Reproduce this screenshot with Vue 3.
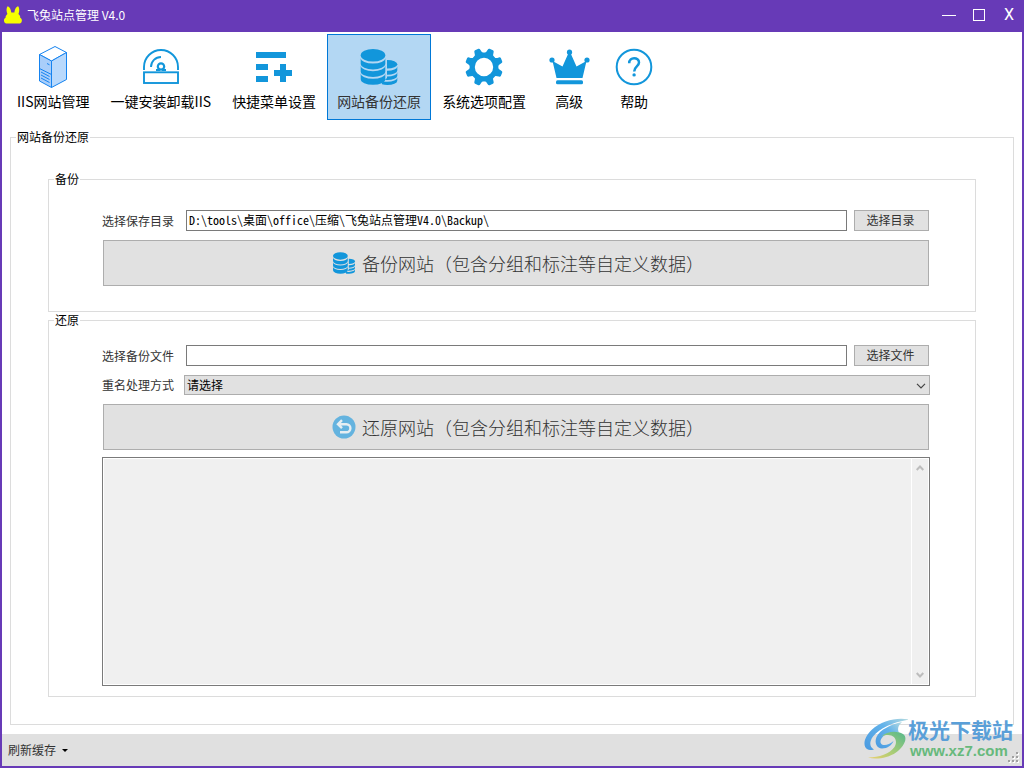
<script setup>
import { ref } from 'vue'

const tools = [
  { id: 'server', label: 'IIS网站管理' },
  { id: 'disc', label: '一键安装卸载IIS' },
  { id: 'menu', label: '快捷菜单设置' },
  { id: 'database', label: '网站备份还原' },
  { id: 'gear', label: '系统选项配置' },
  { id: 'crown', label: '高级' },
  { id: 'help', label: '帮助' },
]
const active = ref('database')
const saveDir = ref('D:\\tools\\桌面\\office\\压缩\\飞兔站点管理V4.0\\Backup\\')
const backupFile = ref('')
const conflict = ref('')
const log = ref('')
const teeth = [22.5, 67.5, 112.5, 157.5, 202.5, 247.5, 292.5, 337.5]
</script>

<template>
  <div class="window">
    <svg class="defs" width="0" height="0" aria-hidden="true">
      <symbol id="icon-server" viewBox="0 0 44 44">
        <g stroke="#1583f0" stroke-width="1" stroke-linejoin="round">
          <path d="M24 1.5 35.5 7.5 20.5 16 8.5 9.5Z" fill="#fff" />
          <path d="M8.5 9.5 20.5 16V42.5L8.5 36Z" fill="#a9cefa" />
          <path d="M20.5 16 35.5 7.5V34.5L20.5 42.5Z" fill="#b9d9fc" />
          <path d="M8.5 23.5 20.5 29.5M10 27 18.5 31.5M10 30 18.5 34.5M10 33 18.5 37.5M16 18.5 18.5 19.8" fill="none" />
        </g>
      </symbol>
      <symbol id="icon-disc" viewBox="0 0 44 44">
        <g fill="none" stroke="#1296db" stroke-width="1.9">
          <path d="M5 25V22a17 17 0 0 1 34 0v3M12 22a10 10 0 0 1 10-10M17 25h4M23 25h4" />
          <circle cx="22" cy="21.5" r="3.2" stroke-width="2.2" />
          <rect x="5" y="27.3" width="34" height="10.7" />
        </g>
      </symbol>
      <symbol id="icon-menu" viewBox="0 0 44 44">
        <path fill="#1296db" d="M4 7h30v6H4zM4 19h12v6H4zM4 31h12v6H4zM28 19h6v6h6v6h-6v6h-6v-6h-6v-6h6z" />
      </symbol>
      <clipPath id="small-stack">
        <path d="M30 13V33L25 37.5V42H42V13Z" />
      </clipPath>
      <symbol id="icon-database" viewBox="0 0 44 44">
        <g fill="#1296db">
          <ellipse cx="16" cy="10.2" rx="12.3" ry="6.3" />
          <path d="M3.7 13A12.3 5.6 0 0 0 28.3 13v5.8A12.3 5.6 0 0 1 3.7 18.8z" />
          <path d="M3.7 20.6A12.3 5.6 0 0 0 28.3 20.6v5.8A12.3 5.6 0 0 1 3.7 26.4z" />
          <path d="M3.7 28.2A12.3 5.6 0 0 0 28.3 28.2v6A12.3 5.6 0 0 1 3.7 34.2z" />
          <g clip-path="url(#small-stack)">
            <ellipse cx="30.3" cy="19.3" rx="10" ry="4.3" />
            <path d="M20.3 21.5A10 4.3 0 0 0 40.3 21.5v4A10 4.3 0 0 1 20.3 25.5z" />
            <path d="M20.3 27.3A10 4.3 0 0 0 40.3 27.3v3.4A10 4.3 0 0 1 20.3 30.7z" />
            <path d="M20.3 32.5A10 4.3 0 0 0 40.3 32.5v3.2A10 4.3 0 0 1 20.3 35.7z" />
          </g>
        </g>
      </symbol>
      <symbol id="icon-gear" viewBox="0 0 44 44">
        <circle cx="22" cy="22" r="11.8" fill="none" stroke="#1296db" stroke-width="5.2" />
        <path
          v-for="a in teeth"
          :key="a"
          d="M16.8 9.5Q18.6 8 18.8 4.6Q18.9 3.2 20.2 3H23.8Q25.1 3.2 25.2 4.6Q25.4 8 27.2 9.5L25 12H19Z"
          fill="#1296db"
          :transform="`rotate(${a} 22 22)`"
        />
      </symbol>
      <symbol id="icon-crown" viewBox="0 0 44 44">
        <g fill="#1296db">
          <circle cx="22.5" cy="7.2" r="2.6" />
          <circle cx="5" cy="15" r="2.6" />
          <circle cx="40" cy="15" r="2.6" />
          <path d="M5.5 16 15.5 21.5 21.5 8H23.5L29.5 21.5 39.5 16 35.5 33H9.5Z" />
          <rect x="9" y="35.2" width="27" height="4" rx="1.5" />
        </g>
      </symbol>
      <symbol id="icon-help" viewBox="0 0 44 44">
        <circle cx="22" cy="22" r="17.3" fill="none" stroke="#1296db" stroke-width="2" />
        <path d="M17.2 18.2C17.2 11.6 27 11.8 27 17.6 27 21.4 22.2 21.6 22.2 26.4" fill="none" stroke="#1296db" stroke-width="2.5" />
        <circle cx="22.1" cy="29.9" r="1.7" fill="#1296db" />
      </symbol>
      <symbol id="icon-undo" viewBox="0 0 24 24">
        <circle cx="12" cy="12" r="11.5" fill="#64b3df" />
        <path d="M6.5 9.2H14.4a4 4 0 0 1 0 8H8M10 5.2 6 9.2l4 4" fill="none" stroke="#e6eef2" stroke-width="2.4" />
      </symbol>
    </svg>

    <header class="titlebar">
      <svg class="logo" width="20" height="18" viewBox="0 0 20 18" aria-hidden="true">
        <path fill="#f7ff00" d="M4.6.2C6.4.4 8 3.5 8.3 6.6H11.4C11.7 3.5 13.3.4 15.1.2 16.8 2 16.4 6 15.4 8 17 9.2 17.4 10.6 17.2 11.8 19.6 13 19.4 16.6 17 17.6H3C.6 16.6.2 13 2.6 11.8 2.4 10.6 3 9.2 4.4 8 3.4 5.6 3 2.2 4.6.2Z" />
      </svg>
      <h1>飞兔站点管理 V4.0</h1>
      <div class="controls">
        <button type="button" aria-label="最小化">
          <svg width="14" height="14" viewBox="0 0 14 14"><path d="M0 7.5H14" stroke="#fff" /></svg>
        </button>
        <button type="button" aria-label="最大化">
          <svg width="14" height="14" viewBox="0 0 14 14"><rect x="1.5" y="1.5" width="11" height="11" fill="none" stroke="#fff" /></svg>
        </button>
        <button type="button" aria-label="关闭">X</button>
      </div>
    </header>

    <nav class="toolbar">
      <button
        v-for="t in tools"
        :key="t.id"
        type="button"
        :class="{ active: active === t.id }"
        @click="active = t.id"
      >
        <svg width="44" height="44" aria-hidden="true"><use :href="`#icon-${t.id}`" /></svg>
        <span>{{ t.label }}</span>
      </button>
    </nav>

    <fieldset class="page">
      <legend>网站备份还原</legend>
      <div class="page-body">
        <fieldset>
          <legend>备份</legend>
          <div class="group backup">
            <div class="row">
              <label for="save-dir">选择保存目录</label>
              <input id="save-dir" v-model="saveDir" type="text" spellcheck="false" />
              <button type="button" class="pick">选择目录</button>
            </div>
            <button type="button" class="action">
              <svg width="24" height="24" viewBox="2 2 40 40" aria-hidden="true"><use href="#icon-database" width="44" height="44" /></svg>
              备份网站（包含分组和标注等自定义数据）
            </button>
          </div>
        </fieldset>

        <fieldset>
          <legend>还原</legend>
          <div class="group restore">
            <div class="row">
              <label for="backup-file">选择备份文件</label>
              <input id="backup-file" v-model="backupFile" type="text" />
              <button type="button" class="pick">选择文件</button>
            </div>
            <div class="row choice">
              <label for="conflict">重名处理方式</label>
              <div class="select">
                <select id="conflict" v-model="conflict">
                  <option value="">请选择</option>
                </select>
                <svg width="10" height="6" viewBox="0 0 10 6" aria-hidden="true"><path d="M1 .8 5 4.8 9 .8" fill="none" stroke="#444" stroke-width="1.2" /></svg>
              </div>
            </div>
            <button type="button" class="action">
              <svg width="24" height="24" aria-hidden="true"><use href="#icon-undo" /></svg>
              还原网站（包含分组和标注等自定义数据）
            </button>
            <div class="log">
              <textarea v-model="log" aria-label="还原日志" readonly></textarea>
              <div class="scroll" aria-hidden="true">
                <svg width="8" height="6" viewBox="0 0 8 6"><path d="M.7 5 4 1.5 7.3 5" fill="none" stroke="#bdbdbd" stroke-width="2" /></svg>
                <svg width="8" height="6" viewBox="0 0 8 6"><path d="M.7 1 4 4.5 7.3 1" fill="none" stroke="#bdbdbd" stroke-width="2" /></svg>
              </div>
            </div>
          </div>
        </fieldset>
      </div>
    </fieldset>

    <footer class="status">
      <button type="button">
        刷新缓存
        <svg width="6" height="3" viewBox="0 0 6 3" aria-hidden="true"><path d="M0 0H6L3 3Z" fill="#000" /></svg>
      </button>
      <svg class="grip" width="12" height="12" viewBox="0 0 12 12" aria-hidden="true">
        <path fill="#fff" d="M9 1h2v2H9zM5 5h2v2H5zM9 5h2v2H9zM1 9h2v2H1zM5 9h2v2H5zM9 9h2v2H9z" />
        <path fill="#a0a0a0" d="M8 0h2v2H8zM4 4h2v2H4zM8 4h2v2H8zM0 8h2v2H0zM4 8h2v2H4zM8 8h2v2H8z" />
      </svg>
    </footer>

    <div class="watermark">
      <svg width="44" height="42" viewBox="2 3 44 42" aria-hidden="true">
        <defs>
          <linearGradient id="wm-blue" x1="0" y1="1" x2="1" y2="0">
            <stop offset="0" stop-color="#4a9ae0" />
            <stop offset=".6" stop-color="#62b2ea" />
            <stop offset="1" stop-color="#b5dbe0" />
          </linearGradient>
          <linearGradient id="wm-green" x1="0" y1="1" x2="1" y2="0">
            <stop offset="0" stop-color="#ecd06c" />
            <stop offset=".45" stop-color="#a8cc76" />
            <stop offset="1" stop-color="#55b88c" />
          </linearGradient>
        </defs>
        <path fill="url(#wm-blue)" d="M47 4.5C36 2 20 5 9.500 15 2 22 .5 31 5 34 7 35.400 9.500 35 12 34.400 7.500 32 7 27 11 21.500 18 13 31 7 47 4.500Z" />
        <path fill="url(#wm-blue)" d="M40 7C29 9.500 18 14.500 14.500 22 12 28 15 33.500 20 33.500 25.500 33.500 30 30 31.500 26 27 30 21 31.500 19 28.500 17 25 21 20 27 18 30 17 34 17 37 17.500 35 14 36.500 10 40 7Z" />
        <path fill="url(#wm-green)" d="M19 21.500C25 16 35 15.500 41 19 46.500 23 42 31.500 34 37.500 26 43 14 45 6 42.500 17 42.500 28 38.500 32.500 32 36 26 33 20 26 20 23.500 20 21 20.500 19 21.500Z" />
      </svg>
      <div class="words">
        <strong>极光下载站</strong>
        <span>www.xz7.com</span>
      </div>
    </div>
  </div>
</template>

<style>
body {
  margin: 0;
}
</style>

<style scoped>
* {
  box-sizing: border-box;
}
.window {
  position: relative;
  display: flex;
  flex-direction: column;
  min-height: 100vh;
  border: solid #673ab7;
  border-width: 0 2px 2px;
  background: #fff;
  color: #000;
  font: 12px/16px "Noto Sans CJK SC", sans-serif;
}
.defs {
  position: absolute;
}
button,
input,
select,
textarea {
  margin: 0;
  font: inherit;
  color: inherit;
}
.titlebar {
  display: flex;
  align-items: center;
  height: 32px;
  padding: 0 5px 2px 1px;
  background: #673ab7;
  color: #fff;
}
h1 {
  flex: 1;
  margin: 0 0 0 4px;
  font-size: 12px;
  font-weight: 400;
}
.controls {
  display: flex;
  gap: 14px;
}
.controls button {
  display: flex;
  align-items: center;
  justify-content: center;
  width: 16px;
  height: 20px;
  padding: 0;
  border: 0;
  background: none;
  font: 16px/20px Roboto, sans-serif;
}
.toolbar {
  display: flex;
  gap: 1px;
  padding: 2px 5px 0;
}
.toolbar button {
  display: flex;
  flex-direction: column;
  align-items: center;
  gap: 2px;
  padding: 10px 9px 8px;
  border: 1px solid transparent;
  background: none;
  font-size: 14px;
  line-height: 20px;
  white-space: nowrap;
}
.toolbar .active {
  border-color: #0078d7;
  background: #b3d7f3;
  color: #333;
}
fieldset {
  min-width: 0;
  margin: 0;
  padding: 0;
  border: 1px solid #dcdcdc;
}
legend {
  margin-left: 5px;
  padding: 0 1px;
}
.page {
  flex: 1;
  margin: 9px 8px;
}
.page-body {
  padding: 26px 37px 27px;
}
.group {
  display: flex;
  flex-direction: column;
  padding: 0 45px 0 53px;
}
.backup {
  padding-top: 23px;
  padding-bottom: 25px;
}
.restore {
  padding-top: 17px;
  padding-bottom: 10px;
}
.row {
  display: flex;
  align-items: center;
  margin-bottom: 9px;
  padding-right: 1px;
}
.row label {
  flex: none;
  width: 84px;
  color: #333;
}
.row input {
  flex: 1;
  min-width: 0;
  height: 21px;
  padding: 0 2px 2px;
  border: 1px solid #7a7a7a;
  background: #fff;
  font-family: "Noto Sans Mono CJK SC", "Liberation Serif", "Noto Sans CJK SC", monospace;
}
.pick,
.action {
  border: 1px solid #adadad;
  background: #e1e1e1;
  color: #333;
}
.pick {
  width: 75px;
  height: 21px;
  margin-left: 7px;
  padding: 0 2px 2px 0;
}
.choice {
  padding-right: 0;
}
.choice label {
  width: 82px;
}
.select {
  position: relative;
  flex: 1;
}
.select select {
  display: block;
  width: 100%;
  height: 20px;
  padding: 0 20px 0 2px;
  border: 1px solid #adadad;
  border-radius: 0;
  background: #e1e1e1;
  appearance: none;
}
.select svg {
  position: absolute;
  top: 8px;
  right: 4px;
  pointer-events: none;
}
.action {
  display: flex;
  align-items: center;
  justify-content: center;
  gap: 6px;
  height: 46px;
  margin: 0 1px;
  padding: 0 0 1px 4px;
  font-size: 18px;
  font-weight: 300;
  line-height: 24px;
}
.log {
  display: flex;
  height: 229px;
  margin-top: 7px;
  padding: 1px;
  border: 1px solid #7a7a7a;
}
.log textarea {
  flex: 1;
  min-width: 0;
  padding: 2px;
  border: 0;
  background: #f0f0f0;
  resize: none;
}
.scroll {
  display: flex;
  flex-direction: column;
  align-items: center;
  justify-content: space-between;
  width: 17px;
  padding: 6px 0;
  border-left: 1px solid #fff;
  background: #f0f0f0;
}
.status {
  display: flex;
  align-items: center;
  justify-content: space-between;
  height: 32px;
  padding: 0 2px 0 6px;
  background: #e0e0e0;
}
.status button {
  display: flex;
  align-items: center;
  gap: 6px;
  padding: 0;
  border: 0;
  background: none;
  color: #333;
}
.grip {
  align-self: flex-end;
  margin-bottom: 2px;
}
.watermark {
  position: absolute;
  right: 9px;
  bottom: 5px;
  display: flex;
  align-items: center;
  pointer-events: none;
}
.words {
  display: flex;
  flex-direction: column;
  color: #5a9fd8;
}
.words strong {
  font-size: 21px;
  line-height: 24px;
}
.words span {
  padding-left: 2px;
  color: #67b97c;
  font: 700 15px/20px "Liberation Sans", sans-serif;
}
</style>
